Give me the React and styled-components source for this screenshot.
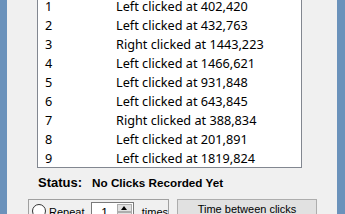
import React from "react";
import styled, { createGlobalStyle } from "styled-components";

const Global = createGlobalStyle`
  html, body { margin: 0; padding: 0; background: #f0f0f0; overflow: hidden; }
  #root { width: 345px; height: 214px; }
`;

const Window = styled.div`
  display: flex;
  width: 345px;
  height: 214px;
  overflow: hidden;
`;

const Frame = styled.div`
  width: ${(p) => p.$w}px;
  flex: none;
  background: #6b92bb;
`;

const Client = styled.div`
  flex: 1;
  background: #f0f0f0;
  display: flex;
  flex-direction: column;
  overflow: hidden;
  font-family: "Liberation Sans", Arial, sans-serif;
  color: #000;
`;

const ListBox = styled.div`
  margin: -5px 0 0 30px;
  width: 263px;
  border: 1px solid #828790;
  background: #fff;
  display: flex;
  flex-direction: column;
  flex: none;
`;

const Row = styled.div`
  display: flex;
  height: 19px;
  align-items: center;
  font-family: "Noto Sans", "Open Sans", sans-serif;
  font-size: 12.7px;
  white-space: nowrap;
`;

const Num = styled.span`
  width: 70px;
  padding-left: 7px;
  flex: none;
  box-sizing: border-box;
  width: 78px;
`;

const StatusRow = styled.div`
  display: flex;
  gap: 10px;
  margin: 7px 0 0 31px;
  height: 15px;
  align-items: center;
  font-family: "Liberation Sans", Arial, sans-serif;
  font-weight: bold;
  font-size: 11.7px;
  flex: none;
`;

const StatusLabel = styled.span`
  font-size: 13px;
`;

const BottomRow = styled.div`
  display: flex;
  gap: 8px;
  margin: 9px 0 0 21px;
  align-items: flex-start;
  font-size: 11px;
  flex: none;
`;

const GroupBox = styled.div`
  width: 141px;
  height: 30px;
  border: 1px solid #a0a0a0;
  display: flex;
  align-items: flex-start;
  padding: 3px 0 0 3px;
  box-sizing: border-box;
`;

const Radio = styled.span`
  width: 12px;
  height: 12px;
  border: 1px solid #333;
  border-radius: 50%;
  background: #fff;
  flex: none;
  margin-top: 1px;
`;

const Label = styled.span`
  margin-left: ${(p) => p.$ml}px;
  line-height: 14px;
  margin-top: 2px;
`;

const Spin = styled.div`
  margin-left: 7px;
  width: 47px;
  height: 20px;
  border: 1px solid #7a7a7a;
  background: #fff;
  box-sizing: border-box;
  display: flex;
  margin-top: -1px;
`;

const SpinValue = styled.span`
  flex: 1;
  text-align: center;
  font-size: 12px;
  line-height: 16px;
  padding-top: 2px;
`;

const SpinButtons = styled.div`
  width: 16px;
  display: flex;
  flex-direction: column;
`;

const SpinBtn = styled.div`
  flex: 1;
  border: 1px solid #adadad;
  background: #e1e1e1;
  display: flex;
  align-items: center;
  justify-content: center;
  margin: ${(p) => (p.$top ? "1px 1px 0 0" : "0 1px 1px 0")};
`;

const Arrow = styled.span`
  width: 0;
  height: 0;
  border-left: 3px solid transparent;
  border-right: 3px solid transparent;
  ${(p) => (p.$up ? "border-bottom: 4px solid #000;" : "border-top: 4px solid #000;")}
`;

const Button = styled.div`
  width: 140px;
  height: 30px;
  box-sizing: border-box;
  border: 1px solid #adadad;
  background: #e1e1e1;
  text-align: center;
  padding-top: 3px;
  font-size: 11px;
  line-height: 13px;
`;

const rows = [
  ["1", "Left clicked at 402,420"],
  ["2", "Left clicked at 432,763"],
  ["3", "Right clicked at 1443,223"],
  ["4", "Left clicked at 1466,621"],
  ["5", "Left clicked at 931,848"],
  ["6", "Left clicked at 643,845"],
  ["7", "Right clicked at 388,834"],
  ["8", "Left clicked at 201,891"],
  ["9", "Left clicked at 1819,824"],
];

export default function App() {
  return (
    <>
      <Global />
      <Window>
        <Frame $w={7} />
        <Client>
          <ListBox>
            {rows.map(([n, t]) => (
              <Row key={n}>
                <Num>{n}</Num>
                <span>{t}</span>
              </Row>
            ))}
          </ListBox>
          <StatusRow>
            <StatusLabel>Status:</StatusLabel>
            <span>No Clicks Recorded Yet</span>
          </StatusRow>
          <BottomRow>
            <GroupBox>
              <Radio />
              <Label $ml={3}>Repeat</Label>
              <Spin>
                <SpinValue>1</SpinValue>
                <SpinButtons>
                  <SpinBtn $top>
                    <Arrow $up />
                  </SpinBtn>
                  <SpinBtn>
                    <Arrow />
                  </SpinBtn>
                </SpinButtons>
              </Spin>
              <Label $ml={8}>times</Label>
            </GroupBox>
            <Button>Time between clicks</Button>
          </BottomRow>
        </Client>
        <Frame $w={8} />
      </Window>
    </>
  );
}
